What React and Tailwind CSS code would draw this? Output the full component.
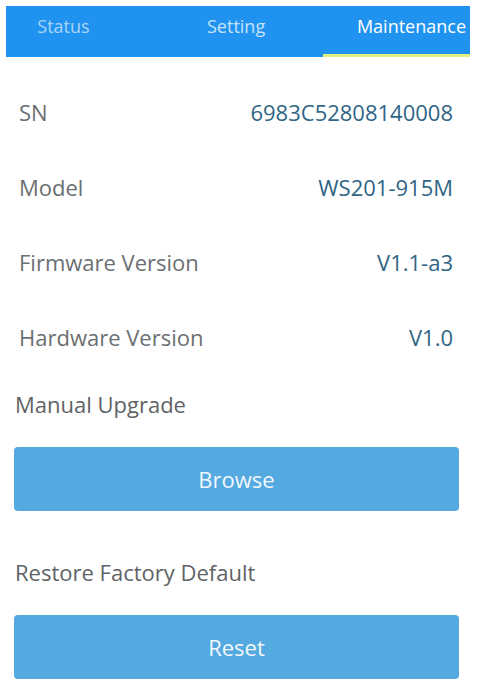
import { useState } from "react";

const info = [
    { label: "SN", value: "6983C52808140008" },
    { label: "Model", value: "WS201-915M" },
    { label: "Firmware Version", value: "V1.1-a3" },
    { label: "Hardware Version", value: "V1.0" },
];

function Maintenance() {
    const [tab] = useState("Maintenance");

    return (
        <div
            className="w-[480px] h-[685px] bg-white overflow-hidden"
            style={{ fontFamily: "'Open Sans', 'Noto Sans', sans-serif" }}
        >
            {/* Tab bar */}
            <div className="pt-[6px] pl-[6px] w-[470px]">
                <div className="flex h-[51px] bg-[#2093f0] text-[18px] whitespace-nowrap">
                    <div className="w-[115px] flex items-center justify-center pb-[10px] text-[#a9d3f6]">
                        Status
                    </div>
                    <div className="w-[202px] flex items-center justify-start pl-[86px] pb-[10px] text-[#c7e2f8]">
                        Setting
                    </div>
                    <div
                        className={`flex-1 flex items-center justify-end pr-[4px] pb-[7px] border-b-[3px] ${
                            tab === "Maintenance" ? "border-[#e3ef82] text-white" : "border-transparent"
                        }`}
                    >
                        Maintenance
                    </div>
                </div>
            </div>

            {/* Device info */}
            <div className="pt-[18px]">
                {info.map((row) => (
                    <div
                        key={row.label}
                        className="flex justify-between items-center h-[75px] pl-[19px] pr-[27px] text-[22px]"
                    >
                        <span className="text-[#6b6f72]">{row.label}</span>
                        <span className="text-[#2f6585]">{row.value}</span>
                    </div>
                ))}
            </div>

            {/* Manual upgrade */}
            <div className="px-[14px] text-[22px]">
                <div className="pl-[1px] h-[40px] flex items-center mt-[9px] text-[#5f6366]">
                    Manual Upgrade
                </div>
                <button className="mt-[23px] w-[445px] h-[64px] rounded-[4px] bg-[#54a9e0] text-[#f2f8fd]">
                    Browse
                </button>

                <div className="pl-[1px] h-[40px] flex items-center mt-[41px] text-[#5f6366]">
                    Restore Factory Default
                </div>
                <button className="mt-[23px] w-[445px] h-[64px] rounded-[4px] bg-[#54a9e0] text-[#f2f8fd]">
                    Reset
                </button>
            </div>
        </div>
    );
}

export default function App() {
    return <Maintenance />;
}
